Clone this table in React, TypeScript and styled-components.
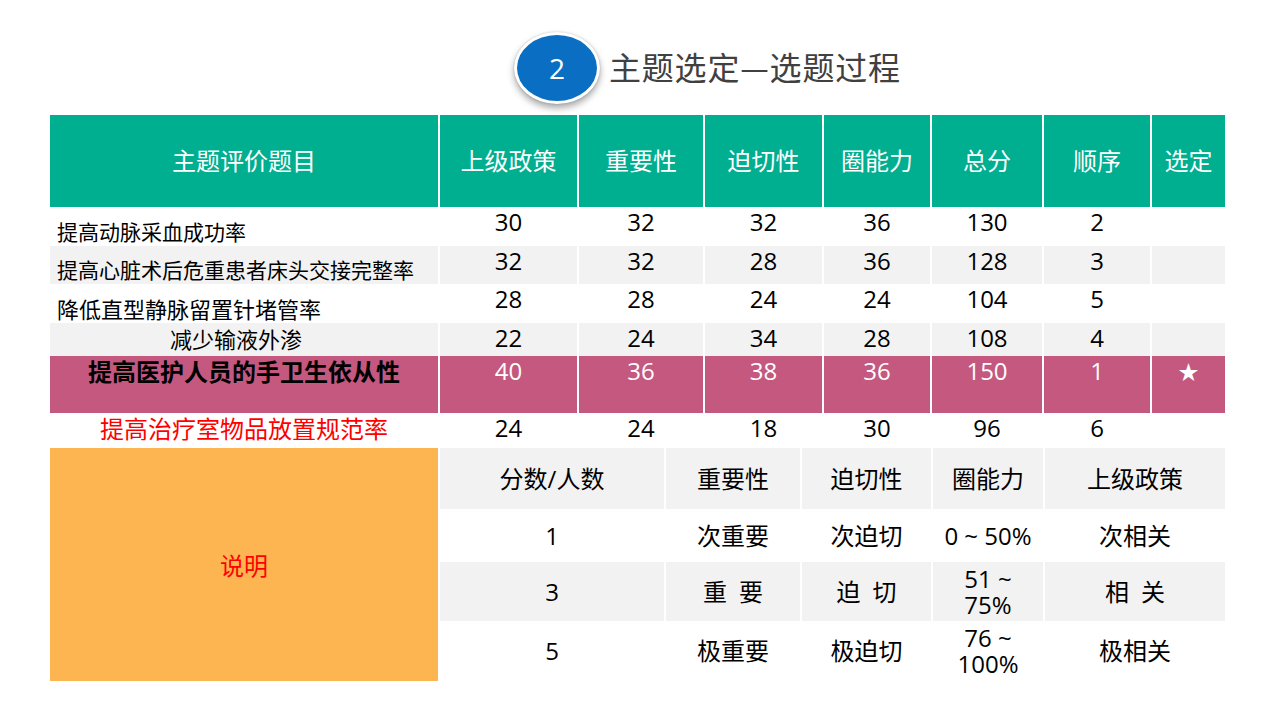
import React from "react";
import styled, { createGlobalStyle } from "styled-components";

const GlobalStyle = createGlobalStyle`
  html, body { margin: 0; padding: 0; background: #ffffff; }
  body { font-family: "Open Sans", "Noto Sans CJK SC", sans-serif; }
`;

const CJK = `"Noto Sans CJK SC", "Noto Sans", sans-serif`;
const NUM = `"Open Sans", "Noto Sans CJK SC", sans-serif`;

const TEAL = "#00AE90";
const PINK = "#C4587F";
const GRAY = "#F2F2F2";
const ORANGE = "#FCB551";

type Tone = "white" | "gray" | "pink";
const toneBg = (t: Tone) => (t === "gray" ? GRAY : t === "pink" ? PINK : "#ffffff");

const Page = styled.div`
  width: 1280px;
  height: 720px;
  background: #ffffff;
  overflow: hidden;
`;

const Header = styled.header`
  height: 115px;
  box-sizing: border-box;
  padding: 20px 0 0 514px;
  display: flex;
  align-items: center;
  gap: 9px;
`;

const Badge = styled.div`
  width: 86px;
  height: 72px;
  box-sizing: border-box;
  border-radius: 50%;
  background: #0A6FC2;
  border: 3px solid #ffffff;
  box-shadow: 0 4px 7px rgba(0, 0, 0, 0.35), 0 0 2px rgba(0, 0, 0, 0.2);
  display: flex;
  align-items: center;
  justify-content: center;
  color: #ffffff;
  font-family: ${NUM};
  font-size: 28px;
  line-height: 1;
`;

const Title = styled.h1`
  margin: 0;
  font-family: ${CJK};
  font-weight: 400;
  font-size: 32px;
  letter-spacing: 0.8px;
  line-height: 1;
  color: #404040;
  margin-top: -3px;
`;

const ScoreTable = styled.div`
  margin-left: 50px;
  width: 1175px;
  display: grid;
  grid-template-columns: 388px 137px 124px 117px 106px 110px 106px 73px;
  grid-template-rows: 92px 39px 38px 39px 33px 57px 35px;
  column-gap: 2px;
`;

const HeadCell = styled.div`
  background: ${TEAL};
  color: #ffffff;
  font-family: ${CJK};
  font-size: 24px;
  display: flex;
  align-items: center;
  justify-content: center;
  padding-bottom: 3px;
  box-sizing: border-box;
`;

const NameCell = styled.div<{
  $tone: Tone;
  $left?: boolean;
  $size: number;
  $bold?: boolean;
  $color?: string;
  $shift?: number;
}>`
  background: ${(p) => toneBg(p.$tone)};
  font-family: ${CJK};
  font-size: ${(p) => p.$size}px;
  font-weight: ${(p) => (p.$bold ? 700 : 400)};
  color: ${(p) => p.$color || "#000000"};
  white-space: nowrap;
  display: flex;
  box-sizing: border-box;
  ${(p) =>
    p.$left
      ? `justify-content: flex-start; align-items: flex-end; padding: 0 0 2px 7px; line-height: 1.2;`
      : `justify-content: center; align-items: flex-start; line-height: 30px; padding-right: ${p.$shift || 0}px;`}
`;

const NumCell = styled.div<{ $tone: Tone }>`
  background: ${(p) => toneBg(p.$tone)};
  color: ${(p) => (p.$tone === "pink" ? "#ffffff" : "#000000")};
  font-family: ${NUM};
  font-size: 24px;
  line-height: 30px;
  text-align: center;
`;

const Star = styled.span`
  font-family: ${CJK};
  font-size: 20px;
  line-height: 30px;
  display: inline-block;
  padding-top: 1px;
`;

const Legend = styled.div`
  margin-left: 50px;
  width: 1175px;
  display: grid;
  grid-template-columns: 388px 224px 134px 129px 110px 180px;
  grid-template-rows: 61px 53px 59px 60px;
  column-gap: 2px;
`;

const NoteCell = styled.div`
  grid-row: 1 / span 4;
  background: ${ORANGE};
  color: #FF0000;
  font-family: ${CJK};
  font-size: 24px;
  display: flex;
  align-items: center;
  justify-content: center;
`;

const LegendCell = styled.div<{ $gray?: boolean }>`
  background: ${(p) => (p.$gray ? GRAY : "#ffffff")};
  color: #000000;
  font-family: ${NUM};
  font-size: 24px;
  line-height: 26px;
  display: flex;
  align-items: center;
  justify-content: center;
  text-align: center;
  white-space: pre-line;
`;

const headers = ["主题评价题目", "上级政策", "重要性", "迫切性", "圈能力", "总分", "顺序", "选定"];

type RowData = {
  name: string;
  tone: Tone;
  left?: boolean;
  size: number;
  bold?: boolean;
  color?: string;
  shift?: number;
  values: string[];
};

const rows: RowData[] = [
  { name: "提高动脉采血成功率", tone: "white", left: true, size: 21, values: ["30", "32", "32", "36", "130", "2", ""] },
  { name: "提高心脏术后危重患者床头交接完整率", tone: "gray", left: true, size: 21, values: ["32", "32", "28", "36", "128", "3", ""] },
  { name: "降低直型静脉留置针堵管率", tone: "white", left: true, size: 22, values: ["28", "28", "24", "24", "104", "5", ""] },
  { name: "减少输液外渗", tone: "gray", size: 22, shift: 16, values: ["22", "24", "34", "28", "108", "4", ""] },
  { name: "提高医护人员的手卫生依从性", tone: "pink", size: 24, bold: true, values: ["40", "36", "38", "36", "150", "1", "★"] },
  { name: "提高治疗室物品放置规范率", tone: "white", size: 24, color: "#FF0000", values: ["24", "24", "18", "30", "96", "6", ""] },
];

const legendRows: string[][] = [
  ["分数/人数", "重要性", "迫切性", "圈能力", "上级政策"],
  ["1", "次重要", "次迫切", "0 ~ 50%", "次相关"],
  ["3", "重\u2002要", "迫\u2002切", "51 ~\n75%", "相\u2002关"],
  ["5", "极重要", "极迫切", "76 ~\n100%", "极相关"],
];

export default function App() {
  return (
    <Page>
      <GlobalStyle />
      <Header>
        <Badge>2</Badge>
        <Title>主题选定—选题过程</Title>
      </Header>
      <ScoreTable>
        {headers.map((h) => (
          <HeadCell key={h}>{h}</HeadCell>
        ))}
        {rows.map((r) => (
          <React.Fragment key={r.name}>
            <NameCell
              $tone={r.tone}
              $left={r.left}
              $size={r.size}
              $bold={r.bold}
              $color={r.color}
              $shift={r.shift}
            >
              {r.name}
            </NameCell>
            {r.values.map((v, i) => (
              <NumCell key={i} $tone={r.tone}>
                {v === "★" ? <Star>★</Star> : v}
              </NumCell>
            ))}
          </React.Fragment>
        ))}
      </ScoreTable>
      <Legend>
        <NoteCell>说明</NoteCell>
        {legendRows.map((row, ri) =>
          row.map((c, ci) => (
            <LegendCell key={`${ri}-${ci}`} $gray={ri % 2 === 0}>
              {c}
            </LegendCell>
          ))
        )}
      </Legend>
    </Page>
  );
}
